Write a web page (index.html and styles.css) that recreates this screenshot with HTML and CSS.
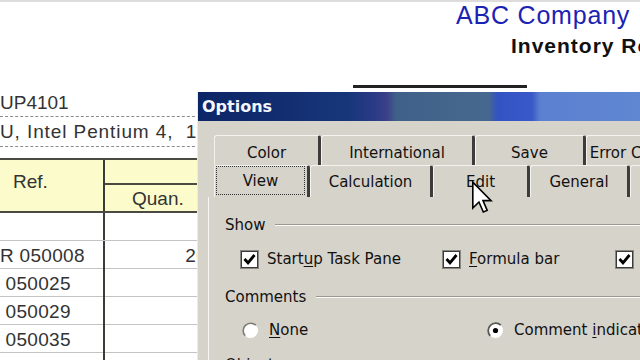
FILE: index.html
```html
<html>
	<head>
		<link rel="stylesheet" href="styles.css">
	</head>
	<body>
		<div class="sheet">
			<div class="sheet-rule"></div>
			<div class="company">ABC Company</div>
			<div class="report-title">Inventory Report</div>
			<div class="cell-underline"></div>
			<div class="info-line">UP4101</div>
			<div class="info-line info-line--spec">U, Intel Pentium 4,&nbsp; 1.7 GHz</div>
			<div class="stock">
				<div class="stock__head">
					<div class="stock__ref">Ref.</div>
					<div class="stock__group"></div>
					<div class="stock__quan">Quan.</div>
				</div>
				<div class="stock__row"><div class="stock__cell"></div><div class="stock__cell stock__cell--num"></div></div>
				<div class="stock__row"><div class="stock__cell">R 050008</div><div class="stock__cell stock__cell--num">20</div></div>
				<div class="stock__row"><div class="stock__cell">&nbsp;050025</div><div class="stock__cell stock__cell--num"></div></div>
				<div class="stock__row"><div class="stock__cell">&nbsp;050029</div><div class="stock__cell stock__cell--num"></div></div>
				<div class="stock__row"><div class="stock__cell">&nbsp;050035</div><div class="stock__cell stock__cell--num"></div></div>
				<div class="stock__row"><div class="stock__cell">&nbsp;050044</div><div class="stock__cell stock__cell--num">20</div></div>
			</div>
		</div>

		<div class="dialog">
			<div class="dialog__title">Options</div>
			<div class="tabs">
				<div class="tabs__row">
					<div class="tab" style="width:107px">Color</div>
					<div class="tab" style="width:154px">International</div>
					<div class="tab" style="width:111px">Save</div>
					<div class="tab" style="width:120px">Error Checking</div>
				</div>
				<div class="tabs__row tabs__row--front">
					<div class="tab tab--active" style="width:96px"><span class="tab__focus">View</span></div>
					<div class="tab" style="width:123px">Calculation</div>
					<div class="tab" style="width:97px">Edit</div>
					<div class="tab" style="width:100px">General</div>
					<div class="tab" style="width:130px">Transition</div>
				</div>
			</div>
			<div class="panel">
				<div class="group-title">Show<span class="group-title__line"></span></div>
				<div class="option-row option-row--checks">
					<div class="option">
						<svg class="checkbox" width="19" height="19" viewBox="0 0 19 19">
							<rect x="0.5" y="0.5" width="18" height="18" fill="#fff" stroke="#8a8782"/>
							<rect x="1.5" y="1.5" width="16" height="16" fill="none" stroke="#3a3a3a"/>
							<polyline points="4.5,9 8,12.8 14.5,5" fill="none" stroke="#000" stroke-width="2.8"/>
						</svg>
						<span>Start<u>u</u>p Task Pane</span>
					</div>
					<div class="option">
						<svg class="checkbox" width="19" height="19" viewBox="0 0 19 19">
							<rect x="0.5" y="0.5" width="18" height="18" fill="#fff" stroke="#8a8782"/>
							<rect x="1.5" y="1.5" width="16" height="16" fill="none" stroke="#3a3a3a"/>
							<polyline points="4.5,9 8,12.8 14.5,5" fill="none" stroke="#000" stroke-width="2.8"/>
						</svg>
						<span><u>F</u>ormula bar</span>
					</div>
					<div class="option">
						<svg class="checkbox" width="19" height="19" viewBox="0 0 19 19">
							<rect x="0.5" y="0.5" width="18" height="18" fill="#fff" stroke="#8a8782"/>
							<rect x="1.5" y="1.5" width="16" height="16" fill="none" stroke="#3a3a3a"/>
							<polyline points="4.5,9 8,12.8 14.5,5" fill="none" stroke="#000" stroke-width="2.8"/>
						</svg>
						<span><u>S</u>tatus bar</span>
					</div>
				</div>
				<div class="group-title group-title--comments">Comments<span class="group-title__line"></span></div>
				<div class="option-row option-row--radios">
					<div class="option">
						<svg class="radio" width="17" height="17" viewBox="0 0 17 17">
							<circle cx="8.5" cy="8.5" r="7.5" fill="#fff"/>
							<path d="M3.2 13.8 A7.5 7.5 0 0 1 13.8 3.2" fill="none" stroke="#7d7a75" stroke-width="1.6"/>
						</svg>
						<span><u>N</u>one</span>
					</div>
					<div class="option">
						<svg class="radio" width="17" height="17" viewBox="0 0 17 17">
							<circle cx="8.5" cy="8.5" r="7.5" fill="#fff"/>
							<path d="M3.2 13.8 A7.5 7.5 0 0 1 13.8 3.2" fill="none" stroke="#5a5853" stroke-width="1.8"/>
							<circle cx="8.5" cy="8.5" r="2.6" fill="#000"/>
						</svg>
						<span>Comment <u>i</u>ndicator only</span>
					</div>
				</div>
				<div class="group-title">Objects<span class="group-title__line"></span></div>
			</div>
		</div>

		<svg class="cursor" width="21" height="33" viewBox="0 0 13 20">
			<path d="M0.5 0.5 L0.5 16.5 L4.3 12.8 L7 19 L9.4 18 L6.8 11.9 L11.8 11.9 Z" fill="#fff" stroke="#000" stroke-width="1" stroke-linejoin="miter"/>
		</svg>
	</body>
</html>
```

FILE: styles.css
```css
body {
	margin: 0;
	width: 640px;
	height: 360px;
	overflow: hidden;
	position: relative;
	background: #fff;
	font-family: "Liberation Sans", Arial, sans-serif;
	color: #333;
}
.sheet {
	width: 640px;
}
.sheet-rule {
	height: 2px;
	background: #dcdcdc;
}
.company {
	padding-left: 456px;
	white-space: nowrap;
	font-size: 25px;
	line-height: 26px;
	letter-spacing: 0.8px;
	color: #1c22b4;
}
.report-title {
	margin-top: 7px;
	padding-left: 511px;
	white-space: nowrap;
	font-size: 21px;
	line-height: 22px;
	letter-spacing: 1px;
	font-weight: bold;
	color: #111;
}
.cell-underline {
	margin: 28px 0 0 353px;
	width: 174px;
	height: 3px;
	background: #222;
}
.info-line {
	width: 200px;
	height: 28px;
	line-height: 29px;
	font-size: 19px;
	white-space: nowrap;
	border-bottom: 1px dashed #8c8c8c;
}
.info-line--spec {
	height: 29px;
	line-height: 30px;
	letter-spacing: 0.9px;
}
.stock {
	margin-top: 11px;
	width: 215px;
	font-size: 19px;
}
.stock__head {
	display: grid;
	grid-template-columns: 105px 110px;
	grid-template-rows: 25px 26px;
	background: #fcfbcc;
	border-top: 2px solid #4a4a42;
	border-bottom: 2px solid #4a4a42;
}
.stock__ref {
	grid-row: 1 / span 2;
	border-right: 2px solid #3c3c36;
	padding: 0 0 8px 13px;
	display: flex;
	align-items: center;
}
.stock__group {
	border-bottom: 2px solid #4a4a42;
}
.stock__quan {
	padding-left: 27px;
	line-height: 28px;
}
.stock__row {
	display: grid;
	grid-template-columns: 105px 110px;
	height: 28px;
	box-sizing: border-box;
	border-bottom: 1px solid #c4c4c4;
}
.stock__cell {
	border-right: 2px solid #3c3c36;
	line-height: 30px;
	white-space: nowrap;
	letter-spacing: 0.3px;
}
.stock__cell--num {
	border-right: 0;
	text-align: right;
	padding-right: 8px;
}

/* dialog window laid over the sheet */
.dialog {
	position: absolute;
	left: 197px;
	top: 92px;
	width: 460px;
	height: 280px;
	background: #d6d3cb;
	border-left: 1px solid #eceae4;
	font-family: "DejaVu Sans", sans-serif;
	font-size: 15px;
	color: #111;
}
.dialog__title {
	height: 29px;
	line-height: 29px;
	padding-left: 4px;
	font-size: 16px;
	font-weight: bold;
	color: #f4f6ff;
	background: linear-gradient(to right, #0c2566 0px, #17367a 150px, #2a3a86 175px, #3a3f88 188px, #3f6088 198px, #47688e 290px, #3353c4 300px, #3a58c8 334px, #5b80d0 342px, #6088d2 460px);
}
.tabs {
	padding: 14px 0 0 16px;
}
.tabs__row {
	display: flex;
	height: 30px;
}
.tabs__row--front {
	height: 32px;
}
.tab {
	box-sizing: border-box;
	flex: none;
	display: flex;
	align-items: center;
	justify-content: center;
	padding-top: 4px;
	border-top: 1px solid #f4f3ef;
	border-left: 1px solid #f4f3ef;
	border-right: 3px solid #3c3c3a;
	border-radius: 3px 3px 0 0;
	white-space: nowrap;
	overflow: hidden;
}
.tabs__row--front .tab {
	padding-top: 0;
}
.tab--active {
	align-items: stretch;
	padding: 2px 2px 2px 1px;
}
.tab__focus {
	flex: 1;
	display: flex;
	align-items: center;
	justify-content: center;
	border: 1px dotted #333;
}
.panel {
	margin-left: 10px;
	padding: 18px 0 0 16px;
	border-left: 1px solid #f7f6f2;
	height: 200px;
}
.group-title {
	display: flex;
	align-items: center;
	gap: 10px;
	height: 20px;
	white-space: nowrap;
}
.group-title--comments {
	margin-top: 18px;
}
.group-title:last-child {
	margin-top: 15px;
}
.group-title__line {
	flex: 1;
	border-top: 1px solid #9c9890;
	border-bottom: 1px solid #fbfaf6;
}
.option-row {
	display: grid;
	height: 20px;
	margin-top: 14px;
}
.option-row--checks {
	padding-left: 15px;
	grid-template-columns: 202px 173px 100px;
}
.option-row--radios {
	margin-top: 13px;
	padding-left: 17px;
	grid-template-columns: 245px 260px;
}
.option {
	display: flex;
	align-items: center;
	gap: 8px;
	white-space: nowrap;
}
.option-row--radios .option {
	gap: 10px;
}
.option u {
	text-underline-offset: 2px;
}
.checkbox,
.radio {
	flex: none;
}
.cursor {
	position: absolute;
	left: 472px;
	top: 181px;
}
```
